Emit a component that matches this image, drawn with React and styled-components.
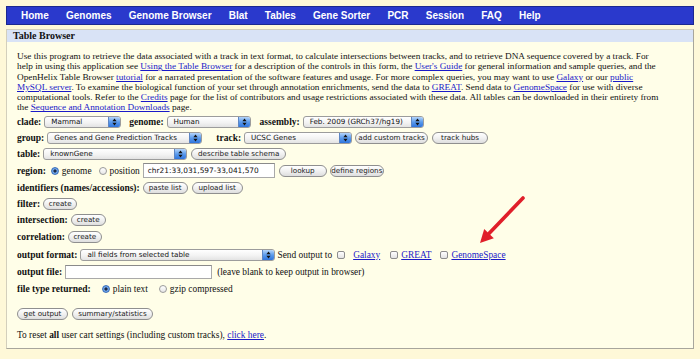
import React from "react";
import styled, { createGlobalStyle } from "styled-components";

const GlobalStyle = createGlobalStyle`
  html, body {
    margin: 0;
    padding: 0;
    background: #fef8d8;
  }
  body {
    font-family: "Liberation Serif", "Times New Roman", serif;
    color: #111;
  }
`;

const Page = styled.div`
  position: relative;
  width: 700px;
  height: 359px;
  padding: 6px 6px 0 6px;
  box-sizing: border-box;
  background: #fef8d8;
  overflow: hidden;
`;

const NavBar = styled.nav`
  display: flex;
  align-items: center;
  gap: 17.2px;
  height: 19px;
  padding-left: 14px;
  box-sizing: border-box;
  background: #2a39cc;
  border: 1px solid #1b2890;
`;

const NavItem = styled.a`
  font-family: "Liberation Sans", Arial, sans-serif;
  font-weight: bold;
  font-size: 10px;
  color: #fff;
  text-decoration: none;
`;

const Panel = styled.section`
  margin-top: 4px;
  height: 320px;
  box-sizing: border-box;
  background: #fffee8;
  border: 1px solid #d3cfbc;
  border-right-color: #a8a69c;
  border-bottom-color: #a8a69c;
`;

const PanelHeader = styled.h1`
  margin: 0;
  height: 12px;
  padding-left: 6px;
  background: #d9e3f6;
  font-size: 10px;
  line-height: 12px;
  font-weight: bold;
  color: #111;
`;

const Body = styled.div`
  padding: 9px 10px 0 10px;
`;

const Intro = styled.p`
  margin: 0 0 1px 0;
  font-size: 9.25px;
  line-height: 10.3px;
  white-space: nowrap;
`;

const Link = styled.a`
  color: #1a1ac8;
  text-decoration: underline;
  margin-left: ${({ $ml }) => $ml || 0}px;
`;

const Row = styled.div`
  display: flex;
  align-items: center;
  height: ${({ $h }) => $h || 16}px;
  margin-top: ${({ $mt }) => $mt || 0}px;
  font-size: 9.4px;
  white-space: nowrap;
`;

const Label = styled.b`
  font-size: 9.5px;
  margin-left: ${({ $ml }) => $ml || 0}px;
  margin-right: 3px;
`;

const Text = styled.span`
  margin-left: ${({ $ml }) => $ml || 0}px;
`;

const SelectBox = styled.div`
  display: inline-flex;
  align-items: center;
  width: ${({ $w }) => $w}px;
  height: 12px;
  margin-left: ${({ $ml }) => $ml || 0}px;
  box-sizing: border-box;
  border: 1px solid #9c9c9c;
  border-radius: 3px;
  background: linear-gradient(#ffffff, #f3f3f3 55%, #e3e3e3);
  overflow: hidden;
`;

const SelectText = styled.span`
  flex: 1;
  padding-left: 6px;
  font-family: "DejaVu Sans", "Lucida Grande", sans-serif;
  font-size: 7.2px;
  color: #111;
`;

const Stepper = styled.span`
  display: flex;
  align-items: center;
  justify-content: center;
  width: 11px;
  height: 100%;
  border-left: 1px solid #5d86c4;
  background: linear-gradient(#b5d5fa, #5b9bec 50%, #2f74dc);
`;

const Button = styled.button`
  width: ${({ $w }) => $w}px;
  height: 12px;
  margin-left: ${({ $ml }) => $ml || 0}px;
  padding: 0;
  box-sizing: border-box;
  border: 1px solid #8f8f8f;
  border-radius: 6px;
  background: linear-gradient(#ffffff, #f1f1f1 50%, #dedede);
  font-family: "DejaVu Sans", "Lucida Grande", sans-serif;
  font-size: 7.2px;
  line-height: 10px;
  color: #222;
  text-align: center;
  white-space: nowrap;
`;

const TextInput = styled.div`
  width: ${({ $w }) => $w}px;
  height: ${({ $h }) => $h || 14}px;
  margin-left: ${({ $ml }) => $ml || 0}px;
  padding-left: 4px;
  box-sizing: border-box;
  display: flex;
  align-items: center;
  background: #fff;
  border: 1px solid #a9a9a9;
  border-top-color: #8a8a8a;
  font-family: "DejaVu Sans", "Lucida Grande", sans-serif;
  font-size: 7.4px;
  color: #111;
`;

const Radio = styled.span`
  display: inline-block;
  width: 8px;
  height: 8px;
  margin-left: ${({ $ml }) => $ml || 0}px;
  margin-right: 3px;
  box-sizing: border-box;
  border-radius: 50%;
  border: 1px solid ${({ $on }) => ($on ? "#3c6fb8" : "#9a9a9a")};
  background: ${({ $on }) =>
    $on
      ? "radial-gradient(circle, #1a2a4a 0 1.4px, #7fb2f0 1.8px, #3f82e0 100%)"
      : "linear-gradient(#ffffff, #e6e6e6)"};
`;

const Check = styled.span`
  display: inline-block;
  width: 8px;
  height: 8px;
  margin-left: ${({ $ml }) => $ml || 0}px;
  margin-right: 3px;
  box-sizing: border-box;
  border: 1px solid #8d8d8d;
  border-radius: 2px;
  background: linear-gradient(#ffffff, #e4e4e4);
`;

const Arrow = styled.svg`
  position: absolute;
  left: 470px;
  top: 190px;
  pointer-events: none;
`;

const StepIcon = () => (
  <svg width="5" height="8" viewBox="0 0 5 8">
    <path d="M2.5 0.5 L4.6 3.2 L0.4 3.2 Z M2.5 7.5 L4.6 4.8 L0.4 4.8 Z" fill="#111" />
  </svg>
);

const Select = ({ w, ml, children }) => (
  <SelectBox $w={w} $ml={ml}>
    <SelectText>{children}</SelectText>
    <Stepper>
      <StepIcon />
    </Stepper>
  </SelectBox>
);

const navItems = [
  "Home",
  "Genomes",
  "Genome Browser",
  "Blat",
  "Tables",
  "Gene Sorter",
  "PCR",
  "Session",
  "FAQ",
  "Help",
];

export default function App() {
  return (
    <>
      <GlobalStyle />
      <Page>
        <NavBar>
          {navItems.map((item) => (
            <NavItem key={item} href="#">
              {item}
            </NavItem>
          ))}
        </NavBar>
        <Panel>
          <PanelHeader>Table Browser</PanelHeader>
          <Body>
            <Intro>
              Use this program to retrieve the data associated with a track in text format, to calculate intersections between tracks, and to retrieve DNA sequence covered by a track. For
              <br />
              help in using this application see <Link href="#">Using the Table Browser</Link> for a description of the controls in this form, the <Link href="#">User's Guide</Link> for general information and sample queries, and the
              <br />
              OpenHelix Table Browser <Link href="#">tutorial</Link> for a narrated presentation of the software features and usage. For more complex queries, you may want to use <Link href="#">Galaxy</Link> or our <Link href="#">public</Link>
              <br />
              <Link href="#">MySQL server</Link>. To examine the biological function of your set through annotation enrichments, send the data to <Link href="#">GREAT</Link>. Send data to <Link href="#">GenomeSpace</Link> for use with diverse
              <br />
              computational tools. Refer to the <Link href="#">Credits</Link> page for the list of contributors and usage restrictions associated with these data. All tables can be downloaded in their entirety from
              <br />
              the <Link href="#">Sequence and Annotation Downloads</Link> page.
            </Intro>

            <Row>
              <Label>clade:</Label>
              <Select w={77}>Mammal</Select>
              <Label $ml={8}>genome:</Label>
              <Select w={84}>Human</Select>
              <Label $ml={9}>assembly:</Label>
              <Select w={121}>Feb. 2009 (GRCh37/hg19)</Select>
            </Row>
            <Row>
              <Label>group:</Label>
              <Select w={155}>Genes and Gene Prediction Tracks</Select>
              <Label $ml={14}>track:</Label>
              <Select w={108}>UCSC Genes</Select>
              <Button $w={73} $ml={3}>add custom tracks</Button>
              <Button $w={56} $ml={4}>track hubs</Button>
            </Row>
            <Row>
              <Label>table:</Label>
              <Select w={144}>knownGene</Select>
              <Button $w={95} $ml={4}>describe table schema</Button>
            </Row>
            <Row $h={18}>
              <Label>region:</Label>
              <Radio $on $ml={2} />
              <Text>genome</Text>
              <Radio $ml={7} />
              <Text>position</Text>
              <TextInput $w={132} $h={15} $ml={3}>chr21:33,031,597-33,041,570</TextInput>
              <Button $w={48} $ml={4}>lookup</Button>
              <Button $w={54} $ml={3}>define regions</Button>
            </Row>
            <Row>
              <Label>identifiers (names/accessions):</Label>
              <Button $w={45}>paste list</Button>
              <Button $w={51} $ml={4}>upload list</Button>
            </Row>
            <Row>
              <Label>filter:</Label>
              <Button $w={34}>create</Button>
            </Row>
            <Row $h={17}>
              <Label>intersection:</Label>
              <Button $w={35}>create</Button>
            </Row>
            <Row $h={17}>
              <Label>correlation:</Label>
              <Button $w={34}>create</Button>
            </Row>
            <Row $h={18}>
              <Label>output format:</Label>
              <Select w={195}>all fields from selected table</Select>
              <Text $ml={2}>Send output to</Text>
              <Check $ml={5} />
              <Link href="#" $ml={5}>Galaxy</Link>
              <Check $ml={10} />
              <Link href="#">GREAT</Link>
              <Check $ml={9} />
              <Link href="#">GenomeSpace</Link>
            </Row>
            <Row>
              <Label>output file:</Label>
              <TextInput $w={147} />
              <Text $ml={5}>(leave blank to keep output in browser)</Text>
            </Row>
            <Row $h={18}>
              <Label>file type returned:</Label>
              <Radio $on $ml={8} />
              <Text>plain text</Text>
              <Radio $ml={11} />
              <Text>gzip compressed</Text>
            </Row>
            <Row $mt={8}>
              <Button $w={51}>get output</Button>
              <Button $w={81} $ml={4}>summary/statistics</Button>
            </Row>
            <Row $mt={5}>
              <Text>
                To reset <b>all</b> user cart settings (including custom tracks), <Link href="#">click here</Link>.
              </Text>
            </Row>
          </Body>
        </Panel>
        <Arrow width="60" height="60" viewBox="0 0 60 60">
          <line x1="53" y1="8" x2="19" y2="43.6" stroke="#e01f2a" strokeWidth="3.6" strokeLinecap="round" />
          <polygon points="10,53 23.8,48.2 14.2,39" fill="#e01f2a" />
        </Arrow>
      </Page>
    </>
  );
}
